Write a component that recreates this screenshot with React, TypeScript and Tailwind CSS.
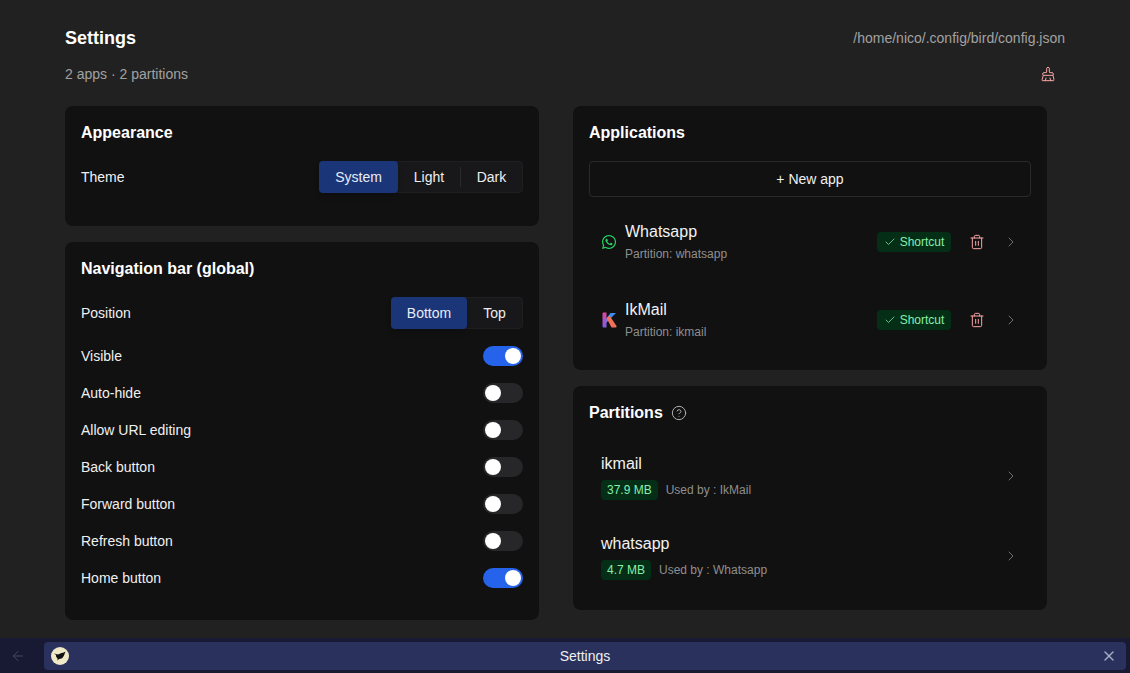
import { ArrowLeft, BrushCleaning, Check, ChevronRight, CircleHelp, Trash2, X } from "lucide-react";
import { FaWhatsapp } from "react-icons/fa";

function Segmented({ items, active }: { items: { label: string; w: string }[]; active: number }) {
  return (
    <div className="flex h-8 rounded border border-[#1f1f1f] bg-[#18181a]">
      {items.map((it, i) => (
        <div key={it.label} className="flex items-center">
          {i > active + 1 && <div className="h-5 w-px bg-[#2a2a2a]" />}
          <div
            className={
              i === active
                ? `-my-px -ml-px flex h-8 items-center justify-center rounded bg-[#1a3578] text-sm text-[#e8ecf5] shadow-md ${it.w}`
                : `flex h-full items-center justify-center text-sm text-[#eeeeee] ${it.w}`
            }
          >
            {it.label}
          </div>
        </div>
      ))}
    </div>
  );
}

function Toggle({ label, on }: { label: string; on?: boolean }) {
  return (
    <div className="flex h-[37px] items-center justify-between">
      <span className="text-sm text-[#f0f0f0]">{label}</span>
      <div className={`flex h-5 w-10 items-center rounded-full px-0.5 ${on ? "justify-end bg-[#2563eb]" : "justify-start bg-[#27272a]"}`}>
        <div className="size-4 rounded-full bg-white" />
      </div>
    </div>
  );
}

function Card({ className, children }: { className?: string; children: React.ReactNode }) {
  return <div className={`rounded-lg bg-[#111111] p-4 ${className ?? ""}`}>{children}</div>;
}

function Title({ children }: { children: React.ReactNode }) {
  return <h2 className="text-base leading-[22px] font-bold text-white">{children}</h2>;
}

function IkIcon() {
  return (
    <svg viewBox="0 0 16 16" className="size-4">
      <defs>
        <linearGradient id="ikl" x1="0" y1="0" x2="0" y2="1">
          <stop offset="0" stopColor="#e0489a" />
          <stop offset="1" stopColor="#7c5ce8" />
        </linearGradient>
      </defs>
      <path d="M15 1 L9.5 1 L5 7 L5 11 Z" fill="#3b8df0" />
      <path d="M1.5 1.5 Q1.5 0.5 2.5 0.5 L5.5 0.5 L5.5 15.5 L2.5 15.5 Q1.5 15.5 1.5 14.5 Z" fill="url(#ikl)" />
      <path d="M5.5 6 L8.5 3.5 L15.5 14 Q15.8 15.5 14.5 15.5 L10.5 15.5 Z" fill="#f0705c" />
    </svg>
  );
}

function AppRow({ name, partition, icon }: { name: string; partition: string; icon: React.ReactNode }) {
  return (
    <div className="flex h-[78px] items-center pr-3 pl-3">
      <div className="flex w-4 items-center justify-center">{icon}</div>
      <div className="ml-2 flex flex-col">
        <span className="text-base leading-6 text-[#f2f2f2]">{name}</span>
        <span className="text-xs leading-5 text-[#8f8f8f]">{partition}</span>
      </div>
      <div className="ml-auto flex h-5 w-[74px] items-center justify-center gap-1 rounded bg-[#052e16] text-xs text-[#86efac]">
        <Check size={12} strokeWidth={1.5} />
        <span>Shortcut</span>
      </div>
      <Trash2 size={16} strokeWidth={1.5} className="ml-[18px] text-[#fca5a5]" />
      <ChevronRight size={16} strokeWidth={1.5} className="ml-[18px] text-[#6e6e6e]" />
    </div>
  );
}

function PartitionRow({ name, size, used }: { name: string; size: string; used: string }) {
  return (
    <div className="flex h-20 items-center pr-3 pl-3">
      <div className="flex flex-col">
        <span className="text-base leading-6 text-[#f2f2f2]">{name}</span>
        <div className="mt-1 flex items-center gap-2">
          <span className="flex h-5 items-center rounded bg-[#052e16] px-1.5 text-xs text-[#86efac]">{size}</span>
          <span className="text-xs text-[#8f8f8f]">{used}</span>
        </div>
      </div>
      <ChevronRight size={16} strokeWidth={1.5} className="ml-auto text-[#6e6e6e]" />
    </div>
  );
}

export default function App() {
  return (
    <div className="flex h-[673px] w-[1130px] flex-col overflow-hidden bg-[#212121] font-['Liberation_Sans',sans-serif]">
      <main className="flex-1 px-[65px] pt-[26px]">
        <div className="flex items-center justify-between">
          <h1 className="text-lg leading-6 font-bold text-white">Settings</h1>
          <span className="text-sm text-[#a1a1a1]">/home/nico/.config/bird/config.json</span>
        </div>
        <div className="mt-[14px] flex h-5 items-center justify-between pr-[9px]">
          <span className="text-sm text-[#a1a1a1]">2 apps · 2 partitions</span>
          <BrushCleaning size={16} strokeWidth={1.5} className="text-[#fca5a5]" />
        </div>
        <div className="mt-[22px] grid w-[982px] grid-cols-2 items-start gap-x-[34px]">
          <div className="flex flex-col gap-4">
            <Card className="h-[120px]">
              <Title>Appearance</Title>
              <div className="mt-[17px] flex items-center justify-between">
                <span className="text-sm text-[#f0f0f0]">Theme</span>
                <Segmented
                  active={0}
                  items={[
                    { label: "System", w: "w-[79px]" },
                    { label: "Light", w: "w-[62px]" },
                    { label: "Dark", w: "w-[61px]" },
                  ]}
                />
              </div>
            </Card>
            <Card className="h-[378px]">
              <Title>Navigation bar (global)</Title>
              <div className="mt-[17px] flex items-center justify-between">
                <span className="text-sm text-[#f0f0f0]">Position</span>
                <Segmented
                  active={0}
                  items={[
                    { label: "Bottom", w: "w-[76px]" },
                    { label: "Top", w: "w-[55px]" },
                  ]}
                />
              </div>
              <div className="mt-[8px] flex flex-col">
                <Toggle label="Visible" on />
                <Toggle label="Auto-hide" />
                <Toggle label="Allow URL editing" />
                <Toggle label="Back button" />
                <Toggle label="Forward button" />
                <Toggle label="Refresh button" />
                <Toggle label="Home button" on />
              </div>
            </Card>
          </div>
          <div className="flex flex-col gap-4">
            <Card className="h-[264px]">
              <Title>Applications</Title>
              <div className="mt-[17px] flex h-9 items-center justify-center rounded border border-[#2a2a2a] text-sm text-[#f0f0f0]">
                + New app
              </div>
              <div className="mt-[6px] flex flex-col">
                <AppRow name="Whatsapp" partition="Partition: whatsapp" icon={<FaWhatsapp size={16} className="text-[#25d366]" />} />
                <AppRow name="IkMail" partition="Partition: ikmail" icon={<IkIcon />} />
              </div>
            </Card>
            <Card className="h-[224px]">
              <div className="flex items-center gap-2">
                <Title>Partitions</Title>
                <CircleHelp size={16} strokeWidth={1.5} className="text-[#b0b0b0]" />
              </div>
              <div className="mt-[12px] flex flex-col">
                <PartitionRow name="ikmail" size="37.9 MB" used="Used by : IkMail" />
                <PartitionRow name="whatsapp" size="4.7 MB" used="Used by : Whatsapp" />
              </div>
            </Card>
          </div>
        </div>
      </main>
      <footer className="flex h-[35px] items-start bg-[#181a33] pt-1 pr-1">
        <div className="flex h-7 w-11 items-center justify-center">
          <ArrowLeft size={16} strokeWidth={1.5} className="mr-[9px] text-[#44465e]" />
        </div>
        <div className="relative flex h-7 flex-1 items-center justify-center rounded bg-[#29315c] text-sm text-[#f0f0f0]">
          <svg viewBox="0 0 18 18" className="absolute top-[5px] left-[7px] size-[18px]">
            <circle cx="9" cy="9" r="9" fill="#efe9c8" />
            <path d="M3 6.5 L7 7.5 L10.5 6 Q13 5.5 14.5 4.5 L13 8.5 Q11.5 12 8 12 L6.5 13.5 L6.5 11.5 Q4.5 9.5 5 8 Z" fill="#111111" />
          </svg>
          <span>Settings</span>
          <X size={16} strokeWidth={2} className="absolute right-[9px] text-[#a8acc4]" />
        </div>
      </footer>
    </div>
  );
}
